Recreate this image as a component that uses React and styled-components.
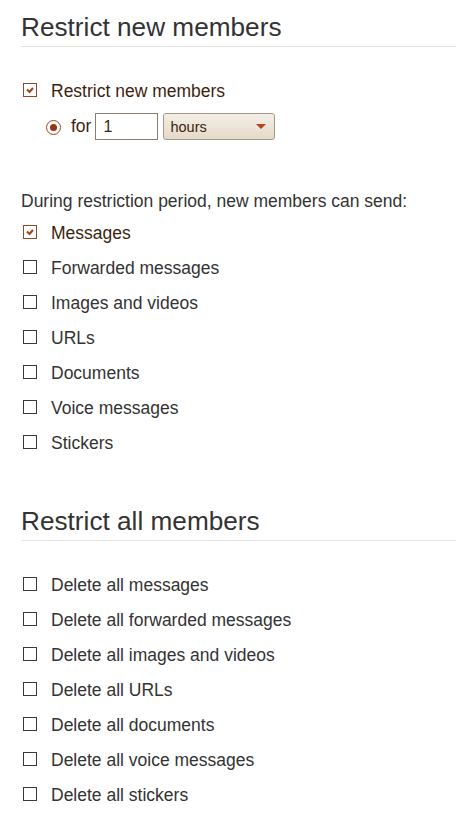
import styled, { createGlobalStyle } from "styled-components"

const GlobalStyle = createGlobalStyle`
  html, body {
    margin: 0;
    padding: 0;
    background: #ffffff;
  }
  body {
    font-family: "Liberation Sans", Arial, sans-serif;
    color: #333333;
  }
`

const newMemberOptions = [
  { label: "Messages", checked: true },
  { label: "Forwarded messages" },
  { label: "Images and videos" },
  { label: "URLs" },
  { label: "Documents" },
  { label: "Voice messages" },
  { label: "Stickers" },
]

const allMemberOptions = [
  "Delete all messages",
  "Delete all forwarded messages",
  "Delete all images and videos",
  "Delete all URLs",
  "Delete all documents",
  "Delete all voice messages",
  "Delete all stickers",
]

const CheckBox = ({ checked }) => (
  <Box $checked={checked}>
    {checked && (
      <svg width="12" height="12" viewBox="0 0 12 12">
        <polyline
          points="3,5.5 5.5,8 9,4"
          fill="none"
          stroke="#a3401a"
          strokeWidth="2"
        />
      </svg>
    )}
  </Box>
)

const CheckRow = ({ label, checked }) => (
  <Row>
    <CheckBox checked={checked} />
    <Label $checked={checked}>{label}</Label>
  </Row>
)

export default function App() {
  return (
    <Page>
      <GlobalStyle />
      <Section>
        <Heading>Restrict new members</Heading>
        <Group>
          <CheckRow label="Restrict new members" checked />
          <PeriodRow>
            <Radio />
            <Label $checked>for</Label>
            <NumberInput>1</NumberInput>
            <Select>
              <span>hours</span>
              <Arrow />
            </Select>
          </PeriodRow>
        </Group>
        <Note>During restriction period, new members can send:</Note>
        {newMemberOptions.map((o) => (
          <CheckRow key={o.label} label={o.label} checked={o.checked} />
        ))}
      </Section>
      <Section $second>
        <Heading>Restrict all members</Heading>
        <Group>
          {allMemberOptions.map((label) => (
            <CheckRow key={label} label={label} />
          ))}
        </Group>
      </Section>
    </Page>
  )
}

const Page = styled.div`
  padding: 0 0 20px 21px;
`

const Section = styled.section`
  display: flex;
  flex-direction: column;
  margin-top: ${({ $second }) => ($second ? "45px" : "12px")};
`

const Heading = styled.h2`
  margin: 0;
  font-size: 26.2px;
  line-height: 31px;
  font-weight: 400;
  color: #333333;
  padding-bottom: 3px;
  border-bottom: 1px solid #e4e4e4;
`

const Group = styled.div`
  display: flex;
  flex-direction: column;
  margin-top: 27px;
`

const Row = styled.div`
  display: flex;
  align-items: center;
  height: 35px;
`

const Box = styled.span`
  box-sizing: border-box;
  display: flex;
  align-items: center;
  justify-content: center;
  width: 14px;
  height: 14px;
  margin: 0 14px 4px 2px;
  border: 1px solid ${({ $checked }) => ($checked ? "#8a4a2c" : "#3a3a3a")};
  background: #ffffff;
`

const Label = styled.span`
  font-size: 17.5px;
  color: ${({ $checked }) => ($checked ? "#3d1f0e" : "#333333")};
`

const PeriodRow = styled.div`
  display: flex;
  align-items: center;
  height: 35px;
  padding-left: 25px;
`

const Radio = styled.span`
  box-sizing: border-box;
  width: 15px;
  height: 15px;
  margin: 2px 10px 0 0;
  border-radius: 50%;
  border: 1.5px solid #a0421a;
  display: flex;
  align-items: center;
  justify-content: center;

  &::after {
    content: "";
    width: 7px;
    height: 7px;
    border-radius: 50%;
    background: #9b3510;
  }
`

const NumberInput = styled.div`
  box-sizing: border-box;
  width: 63px;
  height: 27px;
  margin-left: 4px;
  border: 1px solid #8c7d70;
  padding-left: 7px;
  font-size: 16px;
  line-height: 25px;
  color: #3d1f0e;
`

const Select = styled.div`
  box-sizing: border-box;
  width: 112px;
  height: 27px;
  margin-left: 5px;
  border: 1px solid #a69888;
  border-radius: 3px;
  background: linear-gradient(#f4eee5, #e4dacb);
  display: flex;
  align-items: center;
  justify-content: space-between;
  padding: 0 8px 0 6px;
  font-size: 14.5px;
  color: #3d1f0e;
`

const Arrow = styled.span`
  width: 0;
  height: 0;
  border-left: 5px solid transparent;
  border-right: 5px solid transparent;
  border-top: 5px solid #b5441b;
`

const Note = styled.p`
  margin: 42px 0 0;
  font-size: 17.5px;
  line-height: 30px;
  color: #333333;
`
